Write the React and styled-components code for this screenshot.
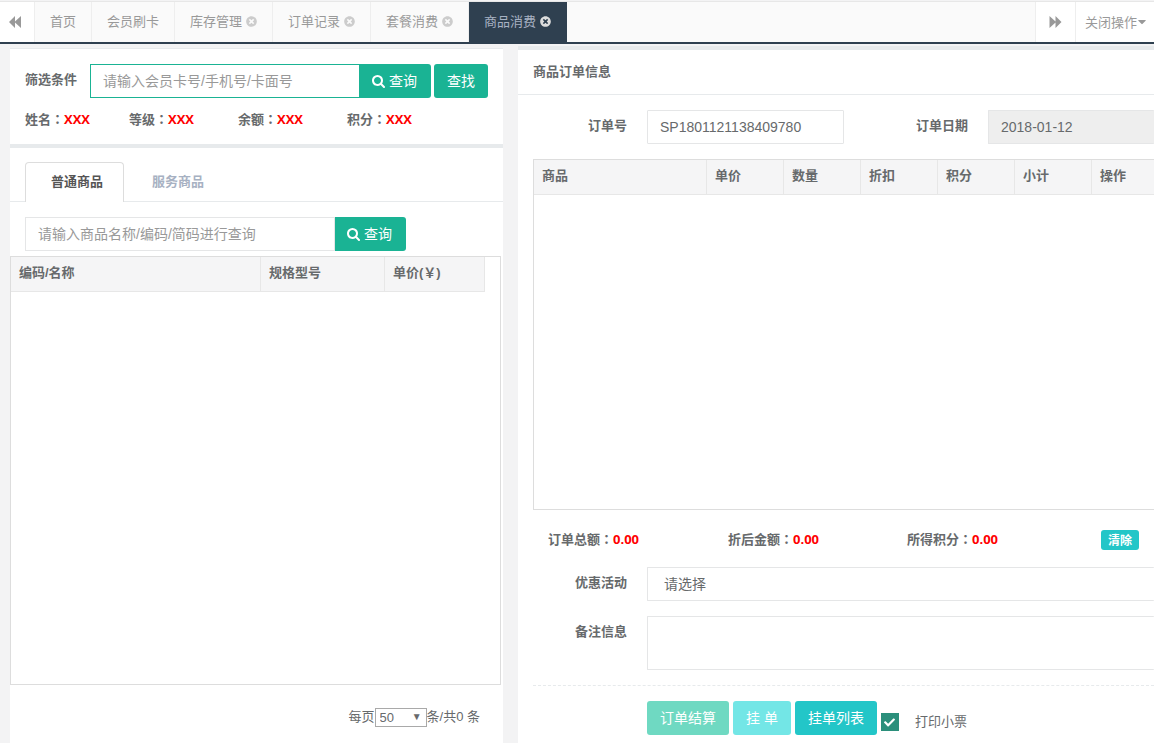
import React, { useState } from 'react';
import styled, { createGlobalStyle } from 'styled-components';
import { FaCaretDown, FaTimesCircle, FaCheck } from 'react-icons/fa';


const tabs = [
    { name: '首页', closable: false },
    { name: '会员刷卡', closable: false },
    { name: '库存管理', closable: true },
    { name: '订单记录', closable: true },
    { name: '套餐消费', closable: true },
    { name: '商品消费', closable: true },
];

const memberFields = ['姓名', '等级', '余额', '积分'];
const totalFields = ['订单总额', '折后金额', '所得积分'];
const orderColumns = ['商品', '单价', '数量', '折扣', '积分', '小计', '操作'];


const SearchIcon = () => (
    <svg viewBox="0 128 1664 1664" fill="currentColor" aria-hidden="true">
        <path d="M1152 832q0-185-131.5-316.5t-316.5-131.5-316.5 131.5-131.5 316.500 131.500 316.500 316.500 131.500 316.500-131.500 131.500-316.500zm512 832q0 52-38 90t-90 38q-54 0-90-38l-343-342q-179 124-399 124-143 0-273.500-55.500t-225-150-150-225-55.500-273.500 55.500-273.500 150-225 225-150 273.500-55.500 273.500 55.500 225 150 150 225 55.500 273.500q0 220-124 399l343 343q37 37 37 90z" />
    </svg>
);

const BackwardIcon = () => (
    <svg viewBox="0 0 13 12" width="13" height="12" fill="currentColor" aria-hidden="true">
        <path d="M0 6L6 0V5.500L12 0V12L6 6.500V12Z" />
    </svg>
);

const ForwardIcon = () => (
    <svg viewBox="0 0 13 12" width="13" height="12" fill="currentColor" aria-hidden="true">
        <path d="M12.500 6L6.500 0V5.500L0.500 0V12L6.500 6.500V12Z" />
    </svg>
);


const App = () => {

    const [activeTab, setActiveTab] = useState('商品消费');
    const [goodsType, setGoodsType] = useState('普通商品');
    const [orderNo, setOrderNo] = useState('SP1801121138409780');
    const [print, setPrint] = useState(true);

    return (
        <>
            <GlobalStyle />

            <TopBar>
                <ScrollButton aria-label="向左"><BackwardIcon /></ScrollButton>
                <TabList>
                    {tabs.map((tab) => (
                        <Tab
                            key={tab.name}
                            href="#"
                            $active={tab.name === activeTab}
                            onClick={() => setActiveTab(tab.name)}
                        >
                            {tab.name}
                            {tab.closable && <FaTimesCircle />}
                        </Tab>
                    ))}
                </TabList>
                <ScrollButton $right aria-label="向右"><ForwardIcon /></ScrollButton>
                <CloseMenu>关闭操作<FaCaretDown /></CloseMenu>
            </TopBar>

            <Page>
                <LeftColumn>
                    <MemberPanel>
                        <SearchRow>
                            <FilterLabel htmlFor="member">筛选条件</FilterLabel>
                            <SearchInput id="member" $focused placeholder="请输入会员卡号/手机号/卡面号" />
                            <SearchButton><SearchIcon />查询</SearchButton>
                            <FindButton>查找</FindButton>
                        </SearchRow>
                        <MemberInfo>
                            {memberFields.map((field) => (
                                <span key={field}>{field}<Colon>：</Colon><Red>XXX</Red></span>
                            ))}
                        </MemberInfo>
                    </MemberPanel>

                    <GoodsPanel>
                        <GoodsTabs>
                            {['普通商品', '服务商品'].map((name) => (
                                <GoodsTab
                                    key={name}
                                    $active={name === goodsType}
                                    onClick={() => setGoodsType(name)}
                                >
                                    {name}
                                </GoodsTab>
                            ))}
                        </GoodsTabs>
                        <GoodsSearch>
                            <SearchInput aria-label="商品" placeholder="请输入商品名称/编码/简码进行查询" />
                            <SearchButton><SearchIcon />查询</SearchButton>
                        </GoodsSearch>
                        <GoodsBox>
                            <Table>
                                <thead>
                                    <tr>
                                        <Th $width="250px">编码/名称</Th>
                                        <Th $width="124px">规格型号</Th>
                                        <Th $width="100px">单价(￥)</Th>
                                    </tr>
                                </thead>
                            </Table>
                        </GoodsBox>
                        <Pager>
                            <label htmlFor="size">每页</label>
                            <PageSize>
                                <select id="size" defaultValue="50">
                                    <option>20</option>
                                    <option>50</option>
                                </select>
                                <span>▼</span>
                            </PageSize>
                            条/共0 条
                        </Pager>
                    </GoodsPanel>
                </LeftColumn>

                <OrderPanel>
                    <OrderTitle>商品订单信息</OrderTitle>
                    <OrderBody>
                        <OrderHead>
                            <FormLabel htmlFor="orderNo">订单号</FormLabel>
                            <Input id="orderNo" value={orderNo} onChange={(e) => setOrderNo(e.target.value)} />
                            <FormLabel htmlFor="orderDate">订单日期</FormLabel>
                            <Input id="orderDate" value="2018-01-12" readOnly $bleed />
                        </OrderHead>

                        <OrderBox>
                            <Table $full>
                                <thead>
                                    <tr>
                                        {orderColumns.map((name, i) => (
                                            <Th key={name} $width={i === 0 ? '173px' : i === 6 ? 'auto' : '77px'}>{name}</Th>
                                        ))}
                                    </tr>
                                </thead>
                            </Table>
                        </OrderBox>

                        <Totals>
                            {totalFields.map((field) => (
                                <span key={field}>{field}<Colon>：</Colon><Red>0.00</Red></span>
                            ))}
                            <ClearButton>清除</ClearButton>
                        </Totals>

                        <FormRow>
                            <FormLabel htmlFor="promo">优惠活动</FormLabel>
                            <Select id="promo">
                                <option>请选择</option>
                            </Select>
                        </FormRow>
                        <FormRow>
                            <FormLabel htmlFor="remark">备注信息</FormLabel>
                            <TextArea id="remark" />
                        </FormRow>

                        <Actions>
                            <ActionButton $color="#6fd9c2">订单结算</ActionButton>
                            <ActionButton $color="#73e6e6">挂 单</ActionButton>
                            <ActionButton $color="#23c6c8">挂单列表</ActionButton>
                            <PrintLabel>
                                <Checkbox>
                                    <input type="checkbox" checked={print} onChange={() => setPrint(!print)} />
                                    {print && <FaCheck />}
                                </Checkbox>
                                打印小票
                            </PrintLabel>
                        </Actions>
                    </OrderBody>
                </OrderPanel>
            </Page>
        </>
    );
}

export default App;


const GlobalStyle = createGlobalStyle`
    * {
        box-sizing: border-box;
    }

    body {
        margin: 0;
        background: #f3f3f4;
        color: #676a6c;
        font-family: "Liberation Sans", "Noto Sans CJK SC", sans-serif;
        font-size: 13px;
        line-height: 20px;
        overflow-x: hidden;
    }

    #root {
        display: flex;
        flex-direction: column;
        min-height: 100vh;
    }

    button, input, select, textarea {
        font-family: inherit;
        color: inherit;
        margin: 0;
    }

    button {
        border: 0;
        padding: 0;
        cursor: pointer;
    }
`

const TopBar = styled.nav`
    display: flex;
    margin-top: 1px;
    height: 43px;
    background: #fafafa;
    border-top: 1px solid #e7e7e7;
    border-bottom: 2px solid #2f4050;
    color: #999;
`

const ScrollButton = styled.button`
    display: flex;
    align-items: center;
    justify-content: ${(props) => (props.$right ? 'center' : 'flex-start')};
    width: ${(props) => (props.$right ? '40px' : '35px')};
    padding-left: ${(props) => (props.$right ? '0' : '9px')};
    background: #fff;
    border: solid #eee;
    border-width: ${(props) => (props.$right ? '0 0 0 1px' : '0 1px 0 0')};
    color: #999;
`

const TabList = styled.div`
    display: flex;
    flex: 1;
`

const Tab = styled.a`
    display: flex;
    align-items: center;
    gap: 4px;
    padding: 0 15px 1px;
    border-right: 1px solid ${(props) => (props.$active ? '#2f4050' : '#eee')};
    background: ${(props) => (props.$active ? '#2f4050' : 'transparent')};
    color: ${(props) => (props.$active ? '#a7b1c2' : '#999')};
    text-decoration: none;

    svg {
        width: 11px;
        height: 11px;
        color: ${(props) => (props.$active ? '#ddd' : '#ccc')};
    }
`

const CloseMenu = styled.button`
    display: flex;
    align-items: center;
    padding: 0 7px 2px 9px;
    background: #fff;
    border-left: 1px solid #eee;
    color: #999;
    font-size: 13px;

    svg {
        width: 10px;
        height: 13px;
    }
`

const Page = styled.main`
    display: grid;
    flex: 1;
    grid-template-columns: 493fr 636fr;
    gap: 15px;
    padding: 2px 0 0 10px;
`

const LeftColumn = styled.div`
    display: flex;
    flex-direction: column;
    min-width: 0;
    padding-top: 2px;
`

const MemberPanel = styled.section`
    padding: 15px 15px 14px;
    background: #fff;
    border-top: 1px solid #e7eaec;
`

const SearchRow = styled.div`
    display: flex;
`

const FilterLabel = styled.label`
    width: 65px;
    padding-top: 6px;
    font-weight: bold;
`

const SearchInput = styled.input`
    flex: 1;
    min-width: 0;
    height: 34px;
    padding: 0 12px;
    background: #fff;
    border: 1px solid ${(props) => (props.$focused ? '#1ab394' : '#e5e6e7')};
    font-size: 14px;
    outline: 0;

    &::placeholder {
        color: #999;
    }
`

const GreenButton = styled.button`
    height: 34px;
    padding-bottom: 2px;
    background: #1ab394;
    color: #fff;
    font-size: 14px;
`

const SearchButton = styled(GreenButton)`
    display: flex;
    align-items: center;
    justify-content: center;
    gap: 4px;
    width: 71px;
    padding-right: 2px;
    border-radius: 0 3px 3px 0;

    svg {
        width: 13px;
        height: 13px;
        margin-top: 2px;
    }
`

const FindButton = styled(GreenButton)`
    width: 54px;
    margin-left: 3px;
    border-radius: 3px;
`

const MemberInfo = styled.div`
    display: grid;
    grid-template-columns: 104px repeat(3, 109px);
    margin-top: 12px;
    font-weight: bold;
`

// full-width colon that sits in the middle of its box
const Colon = styled.span`
    font-family: "Noto Sans CJK TC", sans-serif;
    line-height: 1;
`

const Red = styled.span`
    color: #f00;
    font-family: "Open Sans", sans-serif;
    font-weight: bold;
    line-height: 1;
`

const GoodsPanel = styled.section`
    display: flex;
    flex: 1;
    flex-direction: column;
    background: #fff;
    border-top: 4px solid #e7eaec;
`

const GoodsTabs = styled.div`
    display: flex;
    gap: 2px;
    padding: 14px 15px 0;
    border-bottom: 1px solid #e7eaec;
`

const GoodsTab = styled.button`
    height: 40px;
    margin-bottom: -1px;
    padding: 0 20px 5px 25px;
    background: ${(props) => (props.$active ? '#fff' : 'transparent')};
    border: 1px solid ${(props) => (props.$active ? '#ddd' : 'transparent')};
    border-bottom: 0;
    border-radius: 4px 4px 0 0;
    color: ${(props) => (props.$active ? '#555' : '#a7b1c2')};
    font-size: 13px;
    font-weight: bold;
`

const GoodsSearch = styled.div`
    display: flex;
    margin: 15px 97px 5px 15px;
`

const GoodsBox = styled.div`
    flex: 1;
    margin-right: 2px;
    border: 1px solid #ddd;
`

const Table = styled.table`
    width: ${(props) => (props.$full ? '100%' : 'auto')};
    border-collapse: separate;
    border-spacing: 0;
    table-layout: fixed;

    th:last-child {
        border-right-width: ${(props) => (props.$full ? '0' : '1px')};
    }
`

const Th = styled.th`
    width: ${(props) => props.$width};
    height: 35px;
    padding: 0 8px 2px;
    background: #f5f5f6;
    border: solid #e7e7e7;
    border-width: 0 1px 1px 0;
    text-align: left;
`

const Pager = styled.div`
    display: flex;
    align-items: center;
    justify-content: flex-end;
    height: 58px;
    padding: 6px 23px 0 0;
`

const PageSize = styled.div`
    display: grid;
    align-items: center;

    select, span {
        grid-area: 1 / 1;
    }

    select {
        appearance: none;
        width: 52px;
        height: 19px;
        padding: 0 4px;
        background: #fff;
        border: 1px solid #a9a9a9;
        border-radius: 0;
        font-size: 13px;
    }

    span {
        justify-self: end;
        padding-right: 5px;
        font-size: 10px;
        pointer-events: none;
    }
`

const OrderPanel = styled.section`
    min-width: 0;
    background: #fff;
    border-top: 4px solid #e7eaec;
    overflow: hidden;
`

const OrderTitle = styled.h5`
    height: 45px;
    margin: 0;
    padding: 12px 15px;
    border-bottom: 1px solid #e7eaec;
    font-size: 13px;
`

// the body runs off the right edge of the panel
const OrderBody = styled.div`
    padding: 15px 0 0 15px;
`

const OrderHead = styled.div`
    display: grid;
    grid-template-columns: 114px 197fr 144px 166fr;
`

const FormLabel = styled.label`
    padding: 6px 20px 0 0;
    font-weight: bold;
    text-align: right;
`

const Input = styled.input`
    min-width: 0;
    height: 34px;
    padding: 0 12px;
    background: ${(props) => (props.readOnly ? '#eee' : '#fff')};
    border: 1px solid #e5e6e7;
    border-right-width: ${(props) => (props.$bleed ? '0' : '1px')};
    border-radius: 1px;
    font-size: 14px;
`

const OrderBox = styled.div`
    height: 351px;
    margin-top: 15px;
    border: solid #ddd;
    border-width: 1px 0 1px 1px;
`

const Totals = styled.div`
    display: grid;
    grid-template-columns: 180fr 179fr 194fr 53fr;
    margin: 20px 0 17px 15px;
    font-weight: bold;
`

const ClearButton = styled.button`
    width: 38px;
    height: 20px;
    padding-bottom: 2px;
    background: #23c6c8;
    border-radius: 3px;
    color: #fff;
    font-size: 12px;
    font-weight: bold;
`

const FormRow = styled.div`
    display: grid;
    grid-template-columns: 114px 1fr;
    margin-bottom: 15px;
`

const Select = styled.select`
    appearance: none;
    height: 34px;
    padding: 0 16px;
    background: #fff;
    border: solid #e5e6e7;
    border-width: 1px 0 1px 1px;
    border-radius: 1px;
    font-size: 14px;
`

const TextArea = styled.textarea`
    display: block;
    height: 54px;
    border: solid #e5e6e7;
    border-width: 1px 0 1px 1px;
    border-radius: 1px;
    resize: none;
`

const Actions = styled.div`
    display: flex;
    gap: 4px;
    padding: 15px 0 8px 114px;
    border-top: 1px dashed #e7eaec;
`

const ActionButton = styled.button`
    height: 34px;
    padding: 0 13px 2px;
    background: ${(props) => props.$color};
    border-radius: 3px;
    color: #fff;
    font-size: 14px;
`

const PrintLabel = styled.label`
    display: flex;
    align-items: center;
    gap: 16px;
    padding-top: 8px;
`

const Checkbox = styled.span`
    display: grid;
    place-items: center;
    width: 18px;
    height: 18px;

    input, svg {
        grid-area: 1 / 1;
    }

    input {
        appearance: none;
        width: 18px;
        height: 18px;
        background: #2b8f7b;
    }

    svg {
        width: 11px;
        height: 11px;
        color: #fff;
        z-index: 1;
        pointer-events: none;
    }
`
